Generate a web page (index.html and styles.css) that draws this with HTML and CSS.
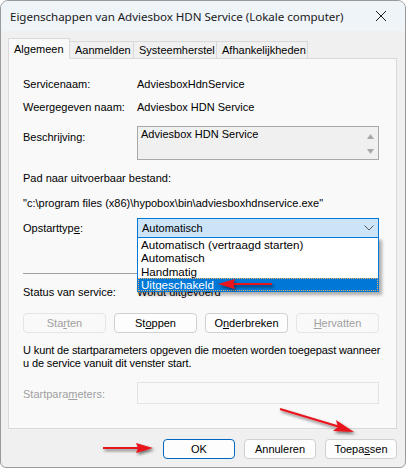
FILE: index.html
```html
<!DOCTYPE html>
<html lang="nl">
<head>
<meta charset="utf-8">
<title>Eigenschappen</title>
<link rel="stylesheet" href="styles.css">
</head>
<body>
<div class="window">
  <div class="titlebar">
    <span class="title">Eigenschappen van Adviesbox HDN Service (Lokale computer)</span>
    <svg class="close" width="12" height="12" viewBox="0 0 12 12"><path d="M1 1L11 11M11 1L1 11" stroke="#1a1a1a" stroke-width="1"/></svg>
  </div>
  <div class="content">
    <div class="tabs">
      <div class="tab active">Algemeen</div>
      <div class="tab">Aanmelden</div>
      <div class="tab">Systeemherstel</div>
      <div class="tab">Afhankelijkheden</div>
    </div>
    <div class="panel">
      <div class="row r1"><span class="label">Servicenaam:</span><span>AdviesboxHdnService</span></div>
      <div class="row r2"><span class="label">Weergegeven naam:</span><span>Adviesbox HDN Service</span></div>
      <div class="row r3">
        <span class="label lbl-desc">Beschrijving:</span>
        <div class="desc">
          <span>Adviesbox HDN Service</span>
          <div class="scroll">
            <svg width="7" height="5" viewBox="0 0 7 5"><path d="M0 5L3.5 0L7 5Z" fill="#a8a8a8"/></svg>
            <svg width="7" height="5" viewBox="0 0 7 5"><path d="M0 0L3.5 5L7 0Z" fill="#a8a8a8"/></svg>
          </div>
        </div>
      </div>
      <div class="line pad">Pad naar uitvoerbaar bestand:</div>
      <div class="line path">"c:\program files (x86)\hypobox\bin\adviesboxhdnservice.exe"</div>
      <div class="row r4">
        <span class="label">Opstarttyp<u>e</u>:</span>
        <div class="combo">
          <span>Automatisch</span>
          <svg width="10" height="6" viewBox="0 0 10 6"><path d="M0.5 0.5L5 5L9.5 0.5" fill="none" stroke="#5a5a5a" stroke-width="1"/></svg>
          <ul class="list">
            <li>Automatisch (vertraagd starten)</li>
            <li>Automatisch</li>
            <li>Handmatig</li>
            <li class="sel">Uitgeschakeld</li>
          </ul>
        </div>
      </div>
      <hr class="sep">
      <div class="row r5"><span class="label">Status van service:</span><span>Wordt uitgevoerd</span></div>
      <div class="btnrow">
        <button class="btn disabled">Sta<u>r</u>ten</button>
        <button class="btn">St<u>o</u>ppen</button>
        <button class="btn">O<u>n</u>derbreken</button>
        <button class="btn disabled"><u>H</u>ervatten</button>
      </div>
      <p class="info">U kunt de startparameters opgeven die moeten worden toegepast wanneer u de service vanuit dit venster start.</p>
      <div class="row r6">
        <span class="label grey">Startpara<u>m</u>eters:</span>
        <div class="input"></div>
      </div>
    </div>
    <div class="footer">
      <button class="btn fbtn default">OK</button>
      <button class="btn fbtn">Annuleren</button>
      <button class="btn fbtn">Toepa<u>s</u>sen</button>
    </div>
  </div>
  <svg class="arrows" width="406" height="468" viewBox="0 0 406 468">
    <defs>
      <filter id="sh" x="-20%" y="-50%" width="140%" height="200%">
        <feDropShadow dx="1.5" dy="2" stdDeviation="1.5" flood-color="#000" flood-opacity="0.55"/>
      </filter>
    </defs>
    <g filter="url(#sh)" fill="#e8141c" stroke="#e8141c">
      <line x1="103" y1="448" x2="140" y2="448" stroke-width="2"/>
      <path d="M153 448L136 443L138 448L136 453Z" stroke="none"/>
      <line x1="280" y1="409" x2="340" y2="427" stroke-width="2"/>
      <path d="M354 432L336 420L338 427L333 431Z" stroke="none"/>
      <line x1="272" y1="284" x2="232" y2="284" stroke-width="2"/>
      <path d="M218 284L235 279L233 284L235 289Z" stroke="none"/>
    </g>
  </svg>
</div>
</body>
</html>
```
FILE: styles.css
```css
* { box-sizing: border-box; }
html, body { margin: 0; padding: 0; background: #fff; }
body { width: 406px; height: 468px; overflow: hidden; }

.window {
  position: relative;
  width: 406px;
  height: 468px;
  border: 1px solid #9a9a9a;
  border-radius: 8px 8px 6px 6px;
  background: #f0f0f0;
  overflow: hidden;
  font-family: "Liberation Sans", Arial, sans-serif;
  font-size: 11px;
  color: #000;
}

.titlebar {
  height: 30px;
  background: #eff4f9;
  display: flex;
  align-items: center;
  justify-content: space-between;
  padding: 0 18px 0 9px;
}
.title {
  font-family: "Noto Sans", "Open Sans", sans-serif;
  font-size: 11.6px;
  color: #1a1a1a;
  letter-spacing: -0.05px;
}
.close { display: block; }

.content { padding: 6px 8px 0 7px; }

.tabs { display: flex; align-items: flex-end; height: 21px; }
.tab {
  height: 17px;
  line-height: 16px;
  padding: 0 5px;
  border: 1px solid #d9d9d9;
  border-bottom: none;
  border-left: none;
  background: #f0f0f0;
  color: #000;
}
.tab:nth-child(2) { width: 64px; text-align: center; }
.tab:nth-child(3) { width: 83px; text-align: center; }
.tab:nth-child(4) { width: 91px; text-align: center; }
.tab.active {
  height: 21px;
  width: 62px;
  line-height: 20px;
  background: #f9f9f9;
  border-left: 1px solid #d9d9d9;
  padding-left: 5px;
  position: relative;
  margin-bottom: -1px;
  z-index: 1;
}

.panel {
  height: 371px;
  background: #f9f9f9;
  border: 1px solid #d9d9d9;
  padding: 13px 19px 0 14px;
}

.row { display: grid; grid-template-columns: 114px 242px; align-items: center; }
.label { white-space: nowrap; }
.r1 { height: 23px; }
.r2 { height: 23px; }
.r3 { margin-top: 8px; align-items: start; }
.lbl-desc { padding-top: 5px; }
.desc {
  height: 34px;
  border: 1px solid #a8a8a8;
  background: #f0f0f0;
  display: flex;
  justify-content: space-between;
  padding: 1px 0 0 3px;
  line-height: 13px;
}
.scroll {
  width: 16px;
  display: flex;
  flex-direction: column;
  align-items: center;
  justify-content: space-between;
  padding: 6px 0 5px;
}
.scroll svg { display: block; }

.line { line-height: 13px; white-space: nowrap; }
.pad { margin-top: 12px; }
.path { margin-top: 12px; }

.r4 { margin-top: 8px; }
.combo {
  position: relative;
  height: 20px;
  background: #cce4f7;
  border: 1px solid #0078d7;
  display: flex;
  align-items: center;
  justify-content: space-between;
  padding: 0 4px 0 4px;
}
.combo svg { display: block; }
.list {
  position: absolute;
  left: -1px;
  top: 18px;
  width: 242px;
  margin: 0;
  padding: 0;
  list-style: none;
  background: #fff;
  border: 1px solid #0078d7;
  box-shadow: 3px 3px 3px rgba(0,0,0,0.3);
  font-size: 11.6px;
  z-index: 5;
}
.list li { height: 13.3px; line-height: 13px; padding-left: 3px; }
.list li.sel {
  background: #0078d7;
  color: #fff;
  outline: 1px dotted #f6b15a;
  outline-offset: -1px;
}

.sep {
  margin: 35px 0 0;
  width: 114px;
  border: none;
  border-top: 1px solid #a0a0a0;
  height: 0;
}
.r5 { margin-top: 11px; height: 13px; }

.btnrow {
  margin-top: 15px;
  display: grid;
  grid-template-columns: repeat(4, 83px);
  column-gap: 8px;
  width: 356px;
  justify-content: space-between;
}
.btn {
  height: 20px;
  font-family: "Liberation Sans", Arial, sans-serif;
  font-size: 11px;
  color: #000;
  background: #fdfdfd;
  border: 1px solid #d0d0d0;
  border-radius: 4px;
  padding: 0;
}
.btn.disabled { color: #a0a0a0; border-color: #e5e5e5; background: #f9f9f9; }

.info { margin: 11px -20px 0 0; line-height: 13px; width: 362px; letter-spacing: -0.12px; }

.r6 { margin-top: 12px; }
.grey { color: #a0a0a0; padding-top: 2px; }
.input { height: 22px; border: 1px solid #e3e3e3; background: #f9f9f9; }

.footer {
  display: flex;
  justify-content: flex-end;
  gap: 9px;
  margin-top: 10px;
  padding-right: 0;
}
.fbtn { width: 72px; height: 20px; }
.fbtn.default { border: 1px solid #0067c0; }

.arrows { position: absolute; left: -1px; top: -1px; pointer-events: none; z-index: 10; }
```
